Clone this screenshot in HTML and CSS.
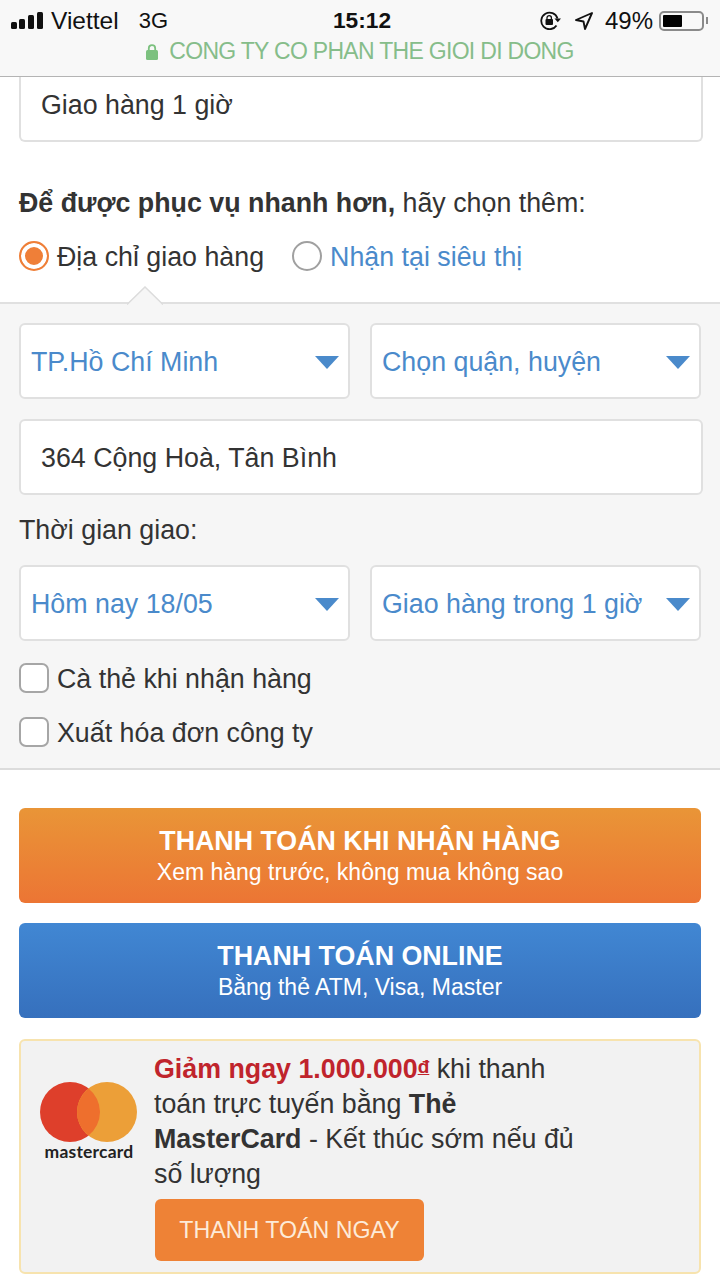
FILE: index.html
```html
<!DOCTYPE html>
<html lang="vi">
<head>
<meta charset="utf-8">
<title>Thanh toán</title>
<link rel="stylesheet" href="styles.css">
</head>
<body>
<header class="topbar">
  <div class="status">
    <div class="status-left">
      <svg class="signal" width="32" height="17" viewBox="0 0 32 17"><rect x="0" y="10" width="6" height="7" rx="1.500"/><rect x="8" y="7" width="6" height="10" rx="1.500"/><rect x="17" y="3" width="6" height="14" rx="1.500"/><rect x="26" y="0" width="6" height="17" rx="1.500"/></svg>
      <span class="carrier">Viettel</span>
      <span class="net">3G</span>
    </div>
    <div class="clock">15:12</div>
    <div class="status-right">
      <svg class="rotlock" width="22" height="19" viewBox="0 0 22 19"><path d="M16.500 14.500A8.300 8.300 0 1 1 17.500 7.500" fill="none" stroke="#111" stroke-width="1.800"/><path d="M14.500 7.500h6.500l-3.200 3.800z" fill="#111"/><rect x="5.500" y="8" width="7.500" height="6" rx="1" fill="#111"/><path d="M7 8.500V6.800a2.200 2.200 0 0 1 4.400 0v1.700" fill="none" stroke="#111" stroke-width="1.300"/></svg>
      <svg class="arrow-loc" width="18" height="18" viewBox="0 0 18 18"><path d="M17 1L1 8l7.500 1.500L10 17z" fill="none" stroke="#111" stroke-width="1.900" stroke-linejoin="round"/></svg>
      <span class="pct">49%</span>
      <span class="battery"><span class="battery-fill"></span></span><span class="battery-tip"></span>
    </div>
  </div>
  <div class="site">
    <svg class="lock" width="12" height="16" viewBox="0 0 12 16"><rect x="0" y="6" width="12" height="10" rx="1.500" fill="#7cc17f"/><path d="M2.800 7V4.400a3.200 3.200 0 0 1 6.400 0V7" fill="none" stroke="#7cc17f" stroke-width="1.800"/></svg>
    <span>CONG TY CO PHAN THE GIOI DI DONG</span>
  </div>
</header>

<main>
  <div class="field field-cut">Giao hàng 1 giờ</div>
  <p class="lead"><b>Để được phục vụ nhanh hơn,</b> hãy chọn thêm:</p>
  <div class="radios">
    <label class="radio-item"><span class="radio radio-on"></span><span class="label-text">Địa chỉ giao hàng</span></label>
    <label class="radio-item link"><span class="radio"></span><span class="label-text">Nhận tại siêu thị</span></label>
  </div>

  <section class="panel">
    <svg class="notch" width="36" height="19" viewBox="0 0 36 19"><path d="M0 18.500L18 1l18 17.500" fill="#f6f6f6" stroke="#dcdcdc" stroke-width="1.500"/></svg>
    <div class="two">
      <div class="select">TP.Hồ Chí Minh<i class="caret"></i></div>
      <div class="select">Chọn quận, huyện<i class="caret"></i></div>
    </div>
    <div class="field field-address">364 Cộng Hoà, Tân Bình</div>
    <div class="time-label">Thời gian giao:</div>
    <div class="two">
      <div class="select">Hôm nay 18/05<i class="caret"></i></div>
      <div class="select">Giao hàng trong 1 giờ<i class="caret"></i></div>
    </div>
    <label class="check check-first"><span class="box"></span><span class="label-text">Cà thẻ khi nhận hàng</span></label>
    <label class="check"><span class="box"></span><span class="label-text">Xuất hóa đơn công ty</span></label>
  </section>

  <div class="actions">
    <a class="pay pay-orange"><b>THANH TOÁN KHI NHẬN HÀNG</b><span>Xem hàng trước, không mua không sao</span></a>
    <a class="pay pay-blue"><b>THANH TOÁN ONLINE</b><span>Bằng thẻ ATM, Visa, Master</span></a>
    <div class="promo">
      <div class="mc">
        <svg width="98" height="62" viewBox="0 0 98 62"><circle cx="30" cy="31" r="30" fill="#de3f2b"/><circle cx="67" cy="31" r="30" fill="#ec9f38"/><path d="M48.500 7.400A30 30 0 0 1 48.500 54.600A30 30 0 0 1 48.500 7.400z" fill="#ee6f2d"/></svg>
        <span class="mc-name">mastercard</span>
      </div>
      <div class="promo-body">
        <p class="promo-text"><b class="red">Giảm ngay 1.000.000<u class="dong">đ</u></b> khi thanh toán trực tuyến bằng <b>Thẻ MasterCard</b> - Kết thúc sớm nếu đủ số lượng</p>
        <a class="paynow">THANH TOÁN NGAY</a>
      </div>
    </div>
  </div>
</main>
</body>
</html>
```

FILE: styles.css
```css
* { box-sizing: border-box; }
html, body { margin: 0; padding: 0; }
body {
  width: 720px;
  height: 1281px;
  overflow: hidden;
  background: #fff;
  color: #333;
  font-family: "Liberation Sans", Arial, sans-serif;
  font-size: 26.800px;
}
p { margin: 0; }
.topbar {
  height: 77px;
  background: #f8f8f8;
  border-bottom: 1px solid #b4b4b4;
}
.status {
  height: 38px;
  padding: 3px 12px 0 11px;
  display: grid;
  grid-template-columns: 1fr auto 1fr;
  align-items: center;
  color: #111;
  font-size: 22px;
}
.status-left { display: flex; align-items: center; }
.signal { fill: #111; margin-right: 8px; }
.carrier { margin-right: 20px; font-size: 24.500px; }
.clock { font-weight: bold; font-size: 22.700px; margin-left: 5px; }
.status-right { display: flex; align-items: center; justify-content: flex-end; }
.rotlock { margin-right: 13px; }
.arrow-loc { margin-right: 12px; }
.pct { margin-right: 6px; font-size: 24px; }
.battery {
  width: 45px; height: 20px;
  padding: 2px;
  border: 2px solid #8a8a8a;
  border-radius: 5px;
  display: block;
}
.battery-fill { display: block; width: 19px; height: 100%; background: #000; border-radius: 1px; }
.battery-tip { width: 2px; height: 7px; background: #8a8a8a; margin-left: 2px; }
.site {
  display: flex;
  align-items: center;
  justify-content: center;
  gap: 11px;
  height: 27px;
  color: #86bd8a;
  font-size: 23px;
  letter-spacing: -0.700px;
}
.field {
  background: #fff;
  border: 2px solid #e0e0e0;
  border-radius: 6px;
  padding: 2px 0 0 20px;
  display: flex;
  align-items: center;
  width: 684px;
  margin-left: 19px;
}
.field-cut {
  height: 65px;
  border-top: 0;
  border-radius: 0 0 6px 6px;
  padding: 0 0 7px 20px;
}
.lead { margin: 43px 0 0 19px; line-height: 36px; }
.radios { display: flex; margin: 17px 0 0 19px; height: 36px; align-items: center; }
.radio-item { display: flex; align-items: center; gap: 8px; margin-right: 28px; }
.label-text { padding-top: 2px; }
.radio {
  width: 30px; height: 30px;
  border: 2px solid #a0a0a0;
  border-radius: 50%;
  background: #fff;
  display: block;
}
.radio-on {
  border-color: #ef7f38;
  background: #ef7f38;
  box-shadow: inset 0 0 0 4px #fff;
}
.link { color: #4a8acb; }
.panel {
  position: relative;
  margin-top: 28px;
  height: 468px;
  padding-top: 19px;
  background: #f6f6f6;
  border-top: 2px solid #e0e0e0;
  border-bottom: 2px solid #dcdcdc;
}
.notch { position: absolute; left: 127px; top: -18px; }
.two { display: flex; gap: 20px; margin-left: 19px; }
.select {
  width: 331px;
  height: 76px;
  background: #fff;
  border: 2px solid #e0e0e0;
  border-radius: 6px;
  padding: 2px 9px 0 10px;
  display: flex;
  align-items: center;
  justify-content: space-between;
  color: #4a8acb;
  white-space: nowrap;
}
.caret {
  width: 0; height: 0;
  border-left: 12px solid transparent;
  border-right: 12px solid transparent;
  border-top: 13px solid #4a8acb;
}
.field-address { height: 76px; margin-top: 20px; }
.time-label { margin: 17px 0 17px 19px; line-height: 36px; height: 36px; }
.check { display: flex; align-items: center; gap: 8px; margin-left: 19px; height: 36px; }
.check-first { margin-top: 19px; margin-bottom: 18px; }
.box {
  width: 30px; height: 30px;
  background: #fff;
  border: 2px solid #a6a6a6;
  border-radius: 7px;
  display: block;
}
.actions { padding: 38px 19px 0; display: flex; flex-direction: column; gap: 20px; }
.pay {
  height: 95px;
  border-radius: 6px;
  color: #fff;
  display: flex;
  flex-direction: column;
  align-items: center;
  justify-content: center;
}
.pay b { font-size: 26.800px; line-height: 32px; }
.pay span { font-size: 23px; line-height: 30px; }
.pay-orange { background: linear-gradient(#e99537, #ec7534); }
.pay-blue { background: linear-gradient(#4187d3, #3670bd); }
.promo {
  height: 235px;
  margin-top: 1px;
  background: #f2f2f2;
  border: 2px solid #f7e3ae;
  border-radius: 6px;
  display: flex;
  padding-left: 19px;
}
.mc { width: 114px; margin-top: 40px; flex: none; }
.mc svg { display: block; }
.mc-name {
  display: block;
  width: 98px;
  text-align: center;
  margin-top: -1px;
  font-family: Lato, sans-serif;
  font-weight: bold;
  font-size: 17.500px;
  line-height: 20px;
  letter-spacing: 0.200px;
  color: #222;
}
.promo-body { padding-top: 10.500px; width: 430px; }
.promo-text { line-height: 35px; }
.red { color: #c0242c; }
.dong { font-size: 19px; line-height: 0; vertical-align: 5px; }
.paynow {
  display: flex;
  align-items: center;
  justify-content: center;
  width: 269px;
  height: 62px;
  margin: 7.500px 0 0 1px;
  background: #ee8236;
  border-radius: 6px;
  color: #fdebd8;
  font-size: 23.200px;
}
```
